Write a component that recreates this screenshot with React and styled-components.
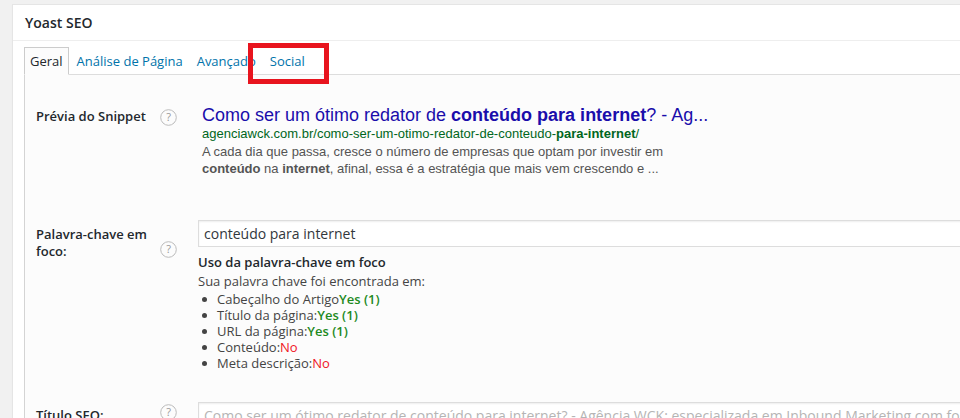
import React from "react";
import styled, { createGlobalStyle } from "styled-components";

const GlobalStyle = createGlobalStyle`
    html, body {
        margin: 0;
        padding: 0;
        overflow: hidden;
        background: #f1f1f1;
        font-family: "Open Sans", "Liberation Sans", sans-serif;
        color: #444;
    }
`;

const tabs = ["Geral", "Análise de Página", "Avançado", "Social"];

const usage = [
    { label: "Cabeçalho do Artigo", result: "Yes (1)", good: true },
    { label: "Título da página:", result: "Yes (1)", good: true },
    { label: "URL da página:", result: "Yes (1)", good: true },
    { label: "Conteúdo:", result: "No", good: false },
    { label: "Meta descrição:", result: "No", good: false },
];

function Help({ top }) {
    return (
        <HelpIcon top={top}>
            <svg width="17" height="17" viewBox="0 0 17 17">
                <circle cx="8.5" cy="8.5" r="7.8" fill="none" stroke="#bbb" strokeWidth="1" />
                <text x="8.5" y="12.4" textAnchor="middle" fontSize="11" fill="#999" fontFamily="Open Sans, sans-serif">
                    ?
                </text>
            </svg>
        </HelpIcon>
    );
}

function App() {
    return (
        <>
            <GlobalStyle />
            <Postbox>
                <Header>Yoast SEO</Header>
                <Inside>
                    <TabList>
                        {tabs.map((t, i) => (
                            <Tab key={t} active={i === 0}>
                                {t}
                                {t === "Social" && <Highlight />}
                            </Tab>
                        ))}
                    </TabList>
                    <Panel>
                        <Row>
                            <Label>Prévia do Snippet</Label>
                            <Help top={4} />
                            <Snippet>
                                <SnippetTitle>
                                    Como ser um ótimo redator de <b>conteúdo para internet</b>? - Ag...
                                </SnippetTitle>
                                <SnippetUrl>
                                    agenciawck.com.br/como-ser-um-otimo-redator-de-conteudo-<b>para-internet</b>/
                                </SnippetUrl>
                                <SnippetDesc>
                                    A cada dia que passa, cresce o número de empresas que optam por investir em
                                    <br />
                                    <b>conteúdo</b> na <b>internet</b>, afinal, essa é a estratégia que mais vem
                                    crescendo e ...
                                </SnippetDesc>
                            </Snippet>
                        </Row>
                        <Row gap={43}>
                            <Label offset={6}>Palavra-chave em foco:</Label>
                            <Help top={21} />
                            <div>
                                <Field>conteúdo para internet</Field>
                                <UsageTitle>Uso da palavra-chave em foco</UsageTitle>
                                <UsageText>Sua palavra chave foi encontrada em:</UsageText>
                                <UsageList>
                                    {usage.map((u) => (
                                        <UsageItem key={u.label}>
                                            <Dot />
                                            {u.label}
                                            <Result good={u.good}>{u.result}</Result>
                                        </UsageItem>
                                    ))}
                                </UsageList>
                            </div>
                        </Row>
                        <Row gap={31}>
                            <Label offset={5}>Título SEO:</Label>
                            <Help top={2} />
                            <Field muted>
                                Como ser um ótimo redator de conteúdo para internet? - Agência WCK: especializada em
                                Inbound Marketing com foco em resultados
                            </Field>
                        </Row>
                    </Panel>
                </Inside>
            </Postbox>
        </>
    );
}

const Postbox = styled.div`
    margin: 4px 0 0 12px;
    width: 1000px;
    background: #fff;
    border: 1px solid #e5e5e5;
    box-shadow: 0 1px 1px rgba(0, 0, 0, 0.04);
`;

const Header = styled.h2`
    margin: 0;
    padding: 0 12px;
    height: 35px;
    line-height: 35px;
    font-size: 14px;
    font-weight: 600;
    color: #23282d;
    border-bottom: 1px solid #eee;
`;

const Inside = styled.div`
    padding: 6px 0 0 11px;
`;

const TabList = styled.div`
    display: flex;
    position: relative;
    z-index: 1;
    margin-bottom: -1px;
`;

const Tab = styled.div`
    position: relative;
    height: 26px;
    line-height: 26px;
    padding: 0 5px;
    margin-right: 2px;
    font-size: 13px;
    color: ${(p) => (p.active ? "#23282d" : "#0073aa")};
    background: ${(p) => (p.active ? "#fcfcfc" : "transparent")};
    border: 1px solid ${(p) => (p.active ? "#ccc" : "transparent")};
    border-bottom: 1px solid ${(p) => (p.active ? "#fcfcfc" : "transparent")};
`;

const Highlight = styled.span`
    position: absolute;
    left: -17px;
    top: -5px;
    right: -19px;
    bottom: -10px;
    border: 5px solid #e8141e;
`;

const Panel = styled.div`
    background: #fcfcfc;
    border-top: 1px solid #ddd;
    border-left: 1px solid #d4d4d4;
    padding: 30px 0 0 11px;
    height: 400px;
`;

const Row = styled.div`
    display: grid;
    grid-template-columns: 124px 38px 1fr;
    align-items: start;
    margin-top: ${(p) => p.gap || 0}px;
`;

const Label = styled.div`
    font-size: 13px;
    font-weight: 600;
    line-height: 17px;
    color: #23282d;
    padding-top: ${(p) => p.offset ?? 3}px;
`;

const HelpIcon = styled.span`
    display: block;
    width: 17px;
    height: 17px;
    margin-top: ${(p) => p.top}px;
`;

const Snippet = styled.div`
    padding-left: 4px;
    font-family: Arial, "Liberation Sans", sans-serif;
`;

const SnippetTitle = styled.div`
    font-size: 18px;
    line-height: 20px;
    color: #1a0dab;
    white-space: nowrap;
`;

const SnippetUrl = styled.div`
    font-size: 13px;
    line-height: 18px;
    color: #006621;
    white-space: nowrap;
`;

const SnippetDesc = styled.div`
    font-size: 13px;
    line-height: 17px;
    color: #545454;
    white-space: nowrap;
`;

const Field = styled.div`
    box-sizing: border-box;
    min-width: 0;
    height: 27px;
    line-height: 25px;
    padding: 0 5px;
    border: 1px solid #ddd;
    background: #fff;
    box-shadow: inset 0 1px 2px rgba(0, 0, 0, 0.07);
    font-size: 14px;
    color: ${(p) => (p.muted ? "#b5b5b5" : "#32373c")};
    white-space: nowrap;
    overflow: hidden;
`;

const UsageTitle = styled.div`
    margin-top: 6px;
    font-size: 13px;
    font-weight: 600;
    line-height: 19px;
    color: #23282d;
`;

const UsageText = styled.div`
    font-size: 13px;
    line-height: 18px;
    color: #444;
`;

const UsageList = styled.ul`
    list-style: none;
    margin: 1px 0 0;
    padding: 0 0 0 4px;
`;

const UsageItem = styled.li`
    display: flex;
    align-items: center;
    font-size: 13px;
    line-height: 16px;
    color: #444;
`;

const Dot = styled.span`
    width: 5px;
    height: 5px;
    border-radius: 50%;
    background: #444;
    margin-right: 10px;
`;

const Result = styled.span`
    color: ${(p) => (p.good ? "#1e8a1e" : "#f0141e")};
    font-weight: ${(p) => (p.good ? 600 : 400)};
`;

export default App;
